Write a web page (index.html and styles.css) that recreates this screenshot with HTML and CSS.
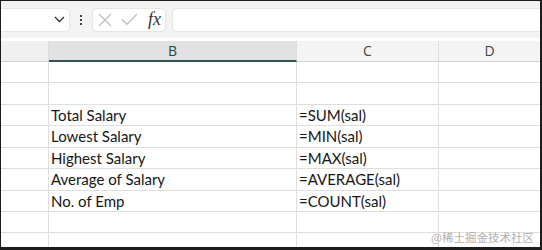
FILE: index.html
```html
<!DOCTYPE html>
<html lang="en">
<head>
    <meta charset="UTF-8">
    <title>Salary Summary</title>
    <link rel="stylesheet" href="styles.css">
</head>
<body>
    <div class="frame">
        <div class="toolbar">
            <div class="name-box">
                <svg class="chevron" width="11" height="7" viewBox="0 0 11 7">
                    <path d="M1 1 L5.5 5.5 L10 1" fill="none" stroke="#333" stroke-width="1.3"/>
                </svg>
            </div>
            <div class="more-dots">
                <span></span><span></span><span></span>
            </div>
            <div class="fx-box">
                <svg width="14" height="14" viewBox="0 0 14 14">
                    <path d="M1 1 L13 13 M13 1 L1 13" fill="none" stroke="#bdbdbd" stroke-width="1.2"/>
                </svg>
                <svg width="17" height="13" viewBox="0 0 17 13">
                    <path d="M1 6.5 L6 11.5 L16 1" fill="none" stroke="#bdbdbd" stroke-width="1.2"/>
                </svg>
                <span class="fx">fx</span>
            </div>
            <div class="formula-input"></div>
        </div>

        <div class="sheet">
            <div class="col-head corner"></div>
            <div class="col-head selected">B</div>
            <div class="col-head">C</div>
            <div class="col-head last">D</div>
        </div>
        <div class="sheet" id="rows">
            <!-- rows are filled in below -->
        </div>

        <div class="watermark">@稀土掘金技术社区</div>
    </div>

    <script>
        const data = [
            ['', ''],
            ['', ''],
            ['Total Salary', '=SUM(sal)'],
            ['Lowest Salary', '=MIN(sal)'],
            ['Highest Salary', '=MAX(sal)'],
            ['Average of Salary', '=AVERAGE(sal)'],
            ['No. of Emp', '=COUNT(sal)'],
            ['', ''],
            ['', '']
        ];
        const rows = document.getElementById('rows');
        data.forEach(([label, formula]) => {
            [ '', label, formula, '' ].forEach((text, i) => {
                const cell = document.createElement('div');
                cell.className = 'cell' + (i === 3 ? ' last' : '');
                cell.textContent = text;
                rows.appendChild(cell);
            });
        });
    </script>
</body>
</html>
```

FILE: styles.css
```css
body {
    margin: 0;
    background-color: #1c1c1c;
}
.frame {
    position: relative;
    margin: 1px 2px 0 1px;
    height: 246px;
    background-color: white;
    overflow: hidden;
}
.toolbar {
    height: 37px;
    background-color: #f3f3f3;
    display: flex;
    align-items: center;
}
.name-box {
    width: 69px;
    height: 24px;
    box-sizing: border-box;
    background-color: white;
    border: 1px solid #e6e6e6;
    border-left: none;
    border-radius: 0 5px 5px 0;
    display: flex;
    align-items: center;
    justify-content: flex-end;
    padding-right: 4px;
}
.more-dots {
    width: 22px;
    display: flex;
    flex-direction: column;
    align-items: center;
    gap: 2px;
}
.more-dots span {
    width: 2px;
    height: 2px;
    background-color: #444;
}
.fx-box {
    width: 74px;
    height: 24px;
    box-sizing: border-box;
    background-color: white;
    border: 1px solid #e6e6e6;
    border-radius: 5px;
    display: flex;
    align-items: center;
    gap: 9px;
    padding-left: 5px;
}
.fx {
    font-family: "Liberation Serif", serif;
    font-style: italic;
    font-size: 18px;
    color: #333;
    margin-left: 1px;
}
.formula-input {
    flex: 1;
    height: 24px;
    margin-left: 6px;
    background-color: white;
    border: 1px solid #e6e6e6;
    border-right: none;
    border-radius: 5px 0 0 5px;
    box-sizing: border-box;
}
.sheet {
    display: grid;
    grid-template-columns: 48px 248px 142px 1fr;
}
.col-head {
    margin-top: 3px;
    height: 21px;
    box-sizing: border-box;
    background-color: #f4f4f4;
    border-right: 1px solid #dcdcdc;
    border-bottom: 1px solid #d4d4d4;
    font-family: "Open Sans", sans-serif;
    font-size: 14px;
    color: #444;
    text-align: center;
    line-height: 19px;
}
.col-head.corner {
    background-color: #f0f0f0;
}
.col-head.selected {
    background-color: #e2e2e2;
    border-bottom: 2px solid #2f5452;
    color: #1f4a3c;
}
.col-head.last {
    border-right: none;
}
.cell {
    height: 21.43px;
    box-sizing: border-box;
    border-right: 1px solid #dedede;
    border-bottom: 1px solid #dedede;
    padding-left: 2px;
    font-family: Lato, sans-serif;
    font-size: 15px;
    color: #161616;
    line-height: 20px;
    white-space: nowrap;
}
.cell.last {
    border-right: none;
}
.watermark {
    position: absolute;
    right: 6px;
    bottom: 2px;
    font-family: "Noto Sans CJK SC", sans-serif;
    font-size: 11.5px;
    color: #b0b0b0;
}
```
